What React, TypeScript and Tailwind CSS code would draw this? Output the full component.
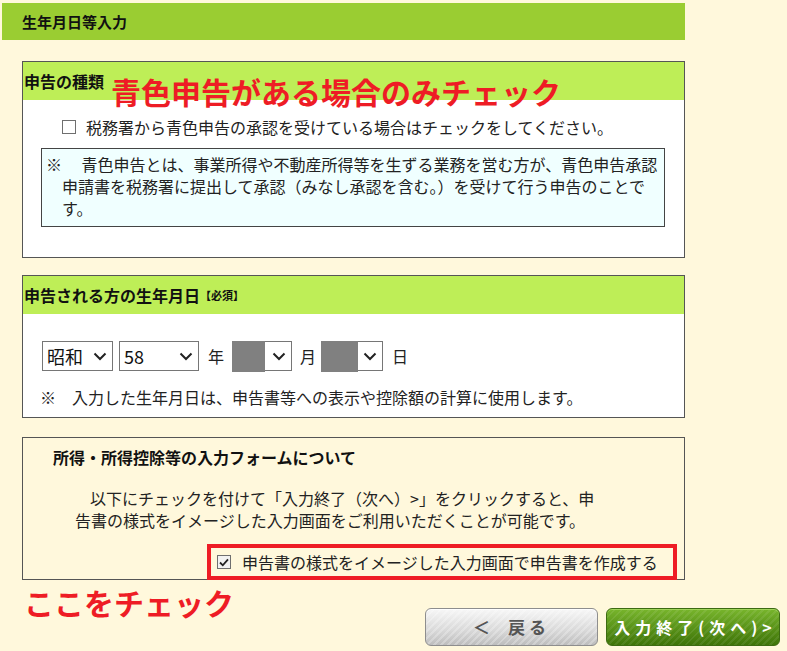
import React from 'react'

const font = "font-['Noto_Sans_CJK_JP','Liberation_Sans',sans-serif]"

function Chevron() {
    return (
        <svg width="14" height="9" viewBox="0 0 14 9" className="shrink-0">
            <path d="M1.5 1.5 L7 7 L12.5 1.5" fill="none" stroke="#222" strokeWidth="2" />
        </svg>
    )
}

function FakeSelect({ width, label, masked }: { width: number; label?: string; masked?: number }) {
    return (
        <div
            className="relative h-[30px] border border-[#767676] bg-white flex items-center justify-end pr-[5px]"
            style={{ width }}
        >
            {label && <span className="absolute left-[4px] top-0 text-[18px] leading-[28px] text-[#111]">{label}</span>}
            {masked && <div className="absolute left-[-1px] top-[-1px] h-[31px] bg-[#808080]" style={{ width: masked }} />}
            <Chevron />
        </div>
    )
}

function Checkbox({ checked }: { checked?: boolean }) {
    return (
        <div className={`w-[14px] h-[14px] border border-[#6f6f6f] flex items-center justify-center ${checked ? 'bg-[#f2f2f2]' : 'bg-white'}`}>
            {checked && (
                <svg width="10" height="9" viewBox="0 0 10 9">
                    <path d="M1 4.5 L3.8 7.3 L9 1.3" fill="none" stroke="#222" strokeWidth="1.8" />
                </svg>
            )}
        </div>
    )
}

export default function App() {
    return (
        <div className={`min-h-[651px] w-[787px] bg-[#FFF8DC] pt-[3px] text-[#222] ${font}`}>
            {/* page title */}
            <div className="ml-[2px] w-[683px] h-[37px] bg-[#9ACD32] flex items-center pl-[20px]">
                <span className="text-[15px] font-bold leading-none text-[#111]">生年月日等入力</span>
            </div>

            {/* 申告の種類 */}
            <div className="ml-[22px] mt-[21px] w-[663px] border border-[#555] bg-white">
                <div className="relative h-[38px] bg-[#BEEE57] flex items-center pl-[1px]">
                    <span className="text-[16px] font-bold leading-none text-[#111]">申告の種類</span>
                    <span className="absolute left-[88px] top-[12px] text-[30px] font-bold leading-[34px] text-[#EE1C25] whitespace-nowrap">
                        青色申告がある場合のみチェック
                    </span>
                </div>
                <div className="pt-[16px] pb-[30px]">
                    <div className="flex items-center h-[22px] pl-[39px] gap-[10px]">
                        <Checkbox />
                        <span className="text-[16px] leading-[22px]">税務署から青色申告の承認を受けている場合はチェックをしてください。</span>
                    </div>
                    <div className="ml-[18px] mt-[10px] w-[624px] h-[79px] border border-[#444] bg-[#F0FFFF] pt-[4px] pl-[4px] pr-[6px]">
                        <p className="text-[16px] leading-[22px] pl-[16px] -indent-[16px]">
                            ※　 青色申告とは、事業所得や不動産所得等を生ずる業務を営む方が、青色申告承認申請書を税務署に提出して承認（みなし承認を含む。）を受けて行う申告のことです。
                        </p>
                    </div>
                </div>
            </div>

            {/* 生年月日 */}
            <div className="ml-[22px] mt-[17px] w-[663px] border border-[#555] bg-white">
                <div className="h-[38px] bg-[#BEEE57] flex items-center pl-[1px]">
                    <span className="text-[16px] font-bold leading-none text-[#111]">申告される方の生年月日</span>
                    <span className="text-[11px] font-bold leading-none text-[#111]">【必須】</span>
                </div>
                <div className="pt-[27px] pb-[9px]">
                    <div className="flex items-center pl-[19px]">
                        <FakeSelect width={71} label="昭和" />
                        <div className="w-[6px]" />
                        <FakeSelect width={80} label="58" />
                        <span className="ml-[9px] text-[16px]">年</span>
                        <div className="w-[8px]" />
                        <FakeSelect width={60} masked={33} />
                        <span className="ml-[8px] text-[16px]">月</span>
                        <div className="w-[5px]" />
                        <FakeSelect width={62} masked={37} />
                        <span className="ml-[9px] text-[16px]">日</span>
                    </div>
                    <p className="mt-[15px] pl-[17px] text-[16px] leading-[22px]">
                        ※　入力した生年月日は、申告書等への表示や控除額の計算に使用します。
                    </p>
                </div>
            </div>

            {/* 入力フォームについて */}
            <div className="ml-[22px] mt-[19px] w-[663px] border border-[#555] pt-[8px]">
                <p className="pl-[30px] text-[16px] font-bold leading-[22px] text-[#111]">所得・所得控除等の入力フォームについて</p>
                <p className="mt-[19px] pl-[52px] text-[16px] leading-[22px]">
                    <span className="pl-[15px]">以下にチェックを付けて「入力終了（次へ）&gt;」をクリックすると、申</span>
                    <br />
                    告書の様式をイメージした入力画面をご利用いただくことが可能です。
                </p>
                <div className="flex justify-end mt-[13px] mr-[7px] -mb-[1px]">
                    <div className="w-[470px] h-[36px] border-[4px] border-[#EE1C25] flex items-center pl-[6px] gap-[11px]">
                        <Checkbox checked />
                        <span className="text-[16px] leading-[22px]">申告書の様式をイメージした入力画面で申告書を作成する</span>
                    </div>
                </div>
            </div>

            {/* annotation + buttons */}
            <div className="flex items-start">
                <span className="ml-[24px] mt-[5px] text-[30px] font-bold leading-[34px] text-[#EE1C25] whitespace-nowrap">ここをチェック</span>
                <div className="ml-auto mr-[7px] mt-[28px] flex gap-[8px]">
                    <button className="w-[173px] h-[38px] rounded-[6px] border border-[#8e8e8e] bg-[image:repeating-linear-gradient(135deg,rgba(255,255,255,0.25)_0px,rgba(255,255,255,0.25)_2px,transparent_2px,transparent_5px),linear-gradient(#f7f7f7,#d8d8d8_60%,#bdbdbd)] shadow-[inset_0_1px_0_#fff] flex items-center justify-center gap-[18px] text-[17px] font-bold text-[#555]">
                        <span>＜</span>
                        <span className="tracking-[4px]">戻る</span>
                    </button>
                    <button className="w-[174px] h-[38px] rounded-[6px] border border-[#3d6b12] bg-[image:repeating-linear-gradient(135deg,rgba(255,255,255,0.08)_0px,rgba(255,255,255,0.08)_2px,transparent_2px,transparent_5px),linear-gradient(#78b52c,#5a9419_50%,#3e7408)] shadow-[inset_0_1px_0_#9fd45a] flex items-center justify-center text-[16px] font-bold text-white tracking-[5px] pl-[5px]">
                        入力終了(次へ)&gt;
                    </button>
                </div>
            </div>
        </div>
    )
}
